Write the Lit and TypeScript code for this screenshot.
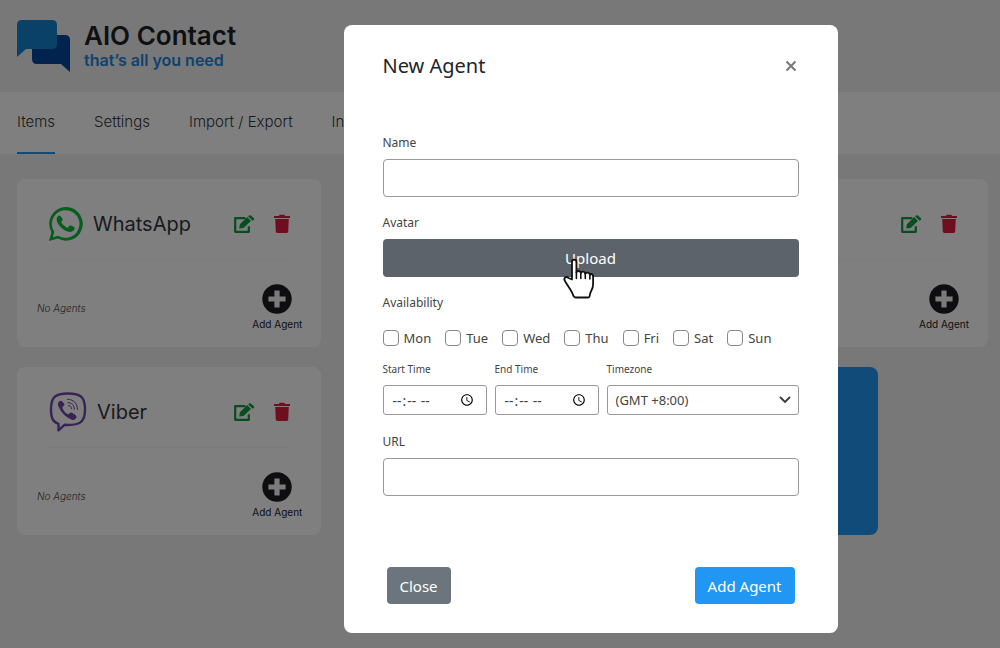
import { LitElement, html, css } from "lit";
import { customElement, property } from "lit/decorators.js";

const plusIcon = html`<svg viewBox="0 0 30 30" width="30" height="30" aria-hidden="true">
  <circle cx="15" cy="15" r="14.7" fill="#1c1c21" />
  <path d="M12.4 6.4h5.2v6h6v5.2h-6v6h-5.2v-6h-6v-5.2h6z" fill="#f6f6f6" />
</svg>`;

const editIcon = html`<svg viewBox="0 0 22 19" width="22" height="19" aria-hidden="true">
  <path d="M12.4 3.2H2.2v13.6h13.6v-5.6" fill="none" stroke="#0f9a3a" stroke-width="2.2" stroke-linejoin="round" />
  <path d="M6.200 13.600l.7-4.400 7.300-7.100 3.800 3.800-7.500 7.100zM15.200 1.400l.9-.8q.9-.8 1.800 0l2.800 2.500q.9.900 0 1.800l-1 .9z" fill="#0f9a3a" />
</svg>`;

const trashIcon = html`<svg viewBox="0 0 18 20" width="18" height="20" aria-hidden="true">
  <path d="M1 2h4.800L6.700.8h4.600l.9 1.200H17v2H1zM2.200 5h13.600L15.200 17.600q-.1 1.400-1.500 1.400H4.300q-1.400 0-1.500-1.400z" fill="#dc1f41" />
</svg>`;

const logos: Record<string, unknown> = {
  WhatsApp: html`<svg viewBox="0 0 36 36" width="36" height="36" aria-hidden="true">
    <path d="M1 35l2.400-8.800A16.800 16.800 0 1 1 9.900 32.600z" fill="#0dbb3d" />
    <path d="M4.800 31.200l1.500-5.400A13.800 13.800 0 1 1 10.400 29.700z" fill="#fff" />
    <path d="M12.400 10.200c-.6-1-1.500-.8-2.300-.1-3.300 3.300-.4 8 2.600 11 3.500 3.500 8 6 11.900 4.200 1.700-.9 2.200-2.300 2-3.700-.1-.5-3.900-2.500-4.500-2.400-.8.200-1.500 2.300-2.200 2.500-1.400.2-6-3.700-6.500-5.500-.2-.7 1.400-1.900 1.300-2.700-.1-.8-1.600-3.300-2.300-3.300z" fill="#0dbb3d" />
  </svg>`,
  Viber: html`<svg viewBox="0 0 40 42" width="40" height="42" aria-hidden="true">
    <path d="M20 2.500C7 2.500 3 6 3 18.500c0 8.500 1.800 12.300 7.500 14.300v6.500l6-5.500c16 1 20.500-3 20.500-15.300C37 6 33 2.500 20 2.500z" fill="#fff" stroke="#6f48a8" stroke-width="2.400" stroke-linejoin="round" />
    <path d="M14 10.300c-.9-1.100-1.800-.7-2.900.2-2 1.800-1.300 3.700-.4 5.600 2.900 6 7 10.200 13 12.600 2 .8 4-.4 4.700-2.500.4-1.300-.4-1.800-1.300-2.500l-3-2c-1.200-.7-2-.1-2.700.9-.7.900-1.600.7-2.500.1-2-1.300-3.400-3-4.200-5.200-.4-1-.1-1.800.8-2.400 1-.7 1.200-1.500.6-2.500z" fill="#6f48a8" />
    <path d="M19.500 8.300c6 0 10 4.200 10 10M20 11.600c4 .2 6.200 2.600 6.400 6.600M20.500 14.600c1.900.1 2.900 1.200 3 3.100" fill="none" stroke="#6f48a8" stroke-width="1" stroke-linecap="round" />
  </svg>`,
};

@customElement("item-card")
export class ItemCard extends LitElement {
  @property() name = "";
  @property() note = "";

  static styles = css`
    :host { display: block; }
    .card { box-sizing: border-box; height: 100%; padding: 24px 19px 16px 20px; background: #fff; border-radius: 8px; }
    .head { display: flex; align-items: center; height: 42px; padding: 0 11px; gap: 9px; }
    h2 { margin: 0; flex: 1; font-size: 20px; line-height: 28px; font-weight: 400; color: #32373c; }
    .tools { display: flex; align-items: center; gap: 18px; }
    button { padding: 0; border: 0; background: none; font: inherit; color: inherit; cursor: pointer; }
    .tools button { display: flex; }
    hr { margin: 14px 12px 24px; border: 0; border-top: 1px solid #f8f8f9; }
    .foot { display: flex; align-items: center; justify-content: space-between; }
    .empty { font-size: 10px; line-height: 16px; font-style: italic; font-weight: 300; color: #444; }
    .add { display: flex; flex-direction: column; align-items: center; gap: 3px; font-size: 10px; line-height: 14px; color: #222; }
  `;

  render() {
    return html`<article class="card">
      <header class="head">
        ${logos[this.name] ?? ""}
        <h2>${this.name}</h2>
        <div class="tools">
          <button aria-label="Edit">${editIcon}</button>
          <button aria-label="Delete">${trashIcon}</button>
        </div>
      </header>
      <hr />
      <div class="foot">
        <span class="empty">${this.note}</span>
        <button class="add">${plusIcon}<span>Add Agent</span></button>
      </div>
    </article>`;
  }
}

@customElement("agent-dialog")
export class AgentDialog extends LitElement {
  static styles = css`
    :host { display: block; width: 100%; max-width: 494px; font-family: "Noto Sans", "Open Sans", sans-serif; color: #444; }
    .dialog { padding: 25px 39px 29px; background: #fff; border-radius: 8px; }
    .head { display: flex; align-items: center; justify-content: space-between; height: 32px; }
    h1 { margin: 0; font-size: 20px; line-height: 32px; font-weight: 400; color: #212529; }
    button { font: inherit; cursor: pointer; }
    .x { display: flex; padding: 2px; border: 0; background: none; }
    form { display: flex; flex-direction: column; padding-top: 52px; }
    label, legend { display: block; padding: 0; font-size: 12px; line-height: 18px; }
    .field { display: flex; flex-direction: column; gap: 7px; margin-bottom: 17px; }
    .text { box-sizing: border-box; width: 100%; height: 38px; padding: 6px 12px; border: 1px solid #999; border-radius: 4px; background: #fff; font: inherit; }
    .upload { position: relative; height: 38px; border: 0; border-radius: 4px; background: #5c636a; color: #fff; font-size: 15px; }
    .cursor { position: absolute; left: 179px; top: 18px; }
    fieldset { margin: 0; padding: 0; border: 0; min-width: 0; }
    .days { display: flex; gap: 14px; margin: 17px 0 15px; }
    .day { display: flex; align-items: center; gap: 5px; font-size: 13px; line-height: 18px; }
    .day input { appearance: none; box-sizing: border-box; width: 16px; height: 16px; margin: 0; border: 1px solid #888; border-radius: 4px; background: #fff; }
    .times { display: grid; grid-template-columns: 104px 104px 1fr; gap: 8px; margin-bottom: 18px; }
    .times label { font-size: 10px; line-height: 14px; margin-bottom: 9px; }
    .small { box-sizing: border-box; width: 100%; height: 30px; padding: 4px 8px; border: 1px solid #999; border-radius: 3px; background: #fff; color: #444; font-family: inherit; font-size: 13px; }
    input.small { font-size: 14px; }
    .pick { position: relative; display: grid; }
    select.small { appearance: none; }
    .chevron { position: absolute; right: 8px; top: 10px; pointer-events: none; }
    .foot { display: flex; justify-content: space-between; padding: 54px 4px 0; }
    .btn { height: 37px; padding: 0 13px; border: 0; border-radius: 4px; color: #fff; font-size: 15px; }
    .close { background: #6c757d; }
    .primary { background: #2196f3; }
  `;

  render() {
    const days = ["Mon", "Tue", "Wed", "Thu", "Fri", "Sat", "Sun"];
    return html`<section class="dialog" role="dialog" aria-modal="true" aria-labelledby="title">
      <header class="head">
        <h1 id="title">New Agent</h1>
        <button class="x" aria-label="Dismiss">
          <svg viewBox="0 0 12 12" width="12" height="12"><path d="M1.500 1.500l9 9m0-9l-9 9" stroke="#777" stroke-width="2" /></svg>
        </button>
      </header>
      <form @submit=${(e: Event) => e.preventDefault()}>
        <div class="field"><label for="name">Name</label><input class="text" id="name" /></div>
        <div class="field">
          <label for="avatar">Avatar</label>
          <button class="upload" id="avatar" type="button">Upload
            <svg class="cursor" viewBox="0 0 34 42" width="34" height="42" aria-hidden="true">
              <path d="M10 22.500V5q0-2.400 2.200-2.400T14.400 5v10.500q0-1.500 2-1.500 2.200 0 2.400 2 .2-1.400 2-1.400 2.200 0 2.500 2.200.3-1.200 2-1.200 2.200 0 2.600 2.200.3-1 1.500-.8 1.700.3 1.700 2.800v7.200q0 3.500-1.700 6.500-1.400 2.600-1.700 5.500-.2 1.500-1.700 1.500H13.500q-1.300 0-1.900-1.300-1-3.200-3.600-7.200L3.200 24.500q-1.700-2.500-.2-3.900 1.500-1.300 3.700.4z" fill="#fff" stroke="#111" stroke-width="1.800" stroke-linejoin="round" />
              <path d="M14.400 15v6.500M18.800 16v5.500M23.300 16.500v5M27.900 18v4" stroke="#111" stroke-width="1.600" stroke-linecap="round" />
            </svg>
          </button>
        </div>
        <fieldset>
          <legend>Availability</legend>
          <div class="days">
            ${days.map((d) => html`<label class="day"><input type="checkbox" />${d}</label>`)}
          </div>
        </fieldset>
        <div class="times">
          <div><label for="start">Start Time</label><input class="small" id="start" type="time" /></div>
          <div><label for="end">End Time</label><input class="small" id="end" type="time" /></div>
          <div>
            <label for="zone">Timezone</label>
            <div class="pick">
              <select class="small" id="zone"><option>(GMT +8:00)</option></select>
              <svg class="chevron" viewBox="0 0 12 10" width="12" height="10"><path d="M1.500 2.500L6 7l4.500-4.500" fill="none" stroke="#343a40" stroke-width="1.800" stroke-linecap="round" /></svg>
            </div>
          </div>
        </div>
        <div class="field"><label for="url">URL</label><input class="text" id="url" type="url" /></div>
        <footer class="foot">
          <button class="btn close" type="button">Close</button>
          <button class="btn primary" type="submit">Add Agent</button>
        </footer>
      </form>
    </section>`;
  }
}

@customElement("app-root")
export class AppRoot extends LitElement {
  static styles = css`
    :host { display: block; font-family: Inter, "Open Sans", sans-serif; }
    .page { min-height: 100vh; background: #f0f0f1; }
    .brand { display: flex; align-items: center; gap: 14px; box-sizing: border-box; height: 92px; padding: 0 17px; }
    .name { font-size: 26px; line-height: 28px; font-weight: 600; color: #1d2327; }
    .tag { font-size: 16px; line-height: 20px; font-weight: 600; color: #2185dc; }
    nav { display: flex; gap: 39px; height: 62px; padding: 0 17px; background: #fff; overflow: hidden; }
    nav a { box-sizing: border-box; padding-top: 19px; border-bottom: 2px solid transparent; font-size: 15px; line-height: 22px; font-weight: 300; color: #32373c; text-decoration: none; white-space: nowrap; }
    nav a.on { border-color: #2196f3; }
    .grid { display: grid; grid-template-columns: repeat(3, 1fr); grid-auto-rows: 168px; gap: 20px 29px; padding: 25px 12px 25px 17px; }
    .new { justify-self: start; width: 64%; border: 0; border-radius: 8px; background: #2196f3; }
    .shade { position: absolute; inset: 0; box-sizing: border-box; display: flex; justify-content: center; align-items: flex-start; padding: 25px 0 15px 181px; background: rgba(0, 0, 0, 0.5); }
  `;

  render() {
    const tabs = ["Items", "Settings", "Import / Export", "Info"];
    return html`<main class="page">
        <header class="brand">
          <svg viewBox="0 0 53 52" width="53" height="52" aria-hidden="true">
            <path d="M15 15h33q5 0 5 5v32l-9-8H20q-5 0-5-5z" fill="#04479d" />
            <path d="M5 0h30q5 0 5 5v19q0 5-5 5H9l-9 8V5q0-5 5-5z" fill="#1583d0" />
          </svg>
          <div><div class="name">AIO Contact</div><div class="tag">that’s all you need</div></div>
        </header>
        <nav>${tabs.map((t, i) => html`<a href="#" class=${i === 0 ? "on" : ""}>${t}</a>`)}</nav>
        <div class="grid">
          <item-card name="WhatsApp" note="No Agents"></item-card>
          <item-card></item-card>
          <item-card></item-card>
          <item-card name="Viber" note="No Agents"></item-card>
          <item-card></item-card>
          <button class="new" aria-label="New item"></button>
        </div>
      </main>
      <div class="shade"><agent-dialog></agent-dialog></div>`;
  }
}
